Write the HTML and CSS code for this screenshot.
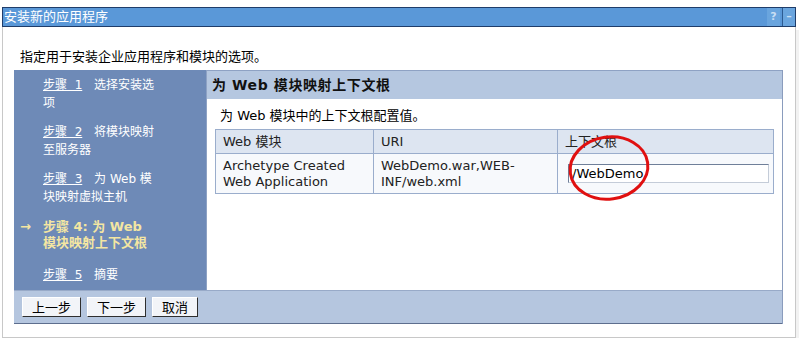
FILE: index.html
```html
<!DOCTYPE html>
<html lang="zh-CN">
<head>
    <meta charset="UTF-8">
    <title>安装新的应用程序</title>
    <link rel="stylesheet" href="styles.css">
</head>
<body>
<div class="window">
    <div class="titlebar">
        <span class="title">安装新的应用程序</span>
        <span class="tools">
            <span class="tool">?</span>
            <span class="tool">–</span>
        </span>
    </div>
    <div class="panel">
        <p class="intro">指定用于安装企业应用程序和模块的选项。</p>
        <div class="wizard">
            <div class="wizard-body">
                <ul class="steps">
                    <li><a href="#">步骤&nbsp;&nbsp;1</a> 选择安装选<br>项</li>
                    <li><a href="#">步骤&nbsp;&nbsp;2</a> 将模块映射<br>至服务器</li>
                    <li><a href="#">步骤&nbsp;&nbsp;3</a> 为 Web 模<br>块映射虚拟主机</li>
                    <li class="current"><span class="arrow">→</span>步骤 4: 为 Web<br>模块映射上下文根</li>
                    <li><a href="#">步骤&nbsp;&nbsp;5</a> 摘要</li>
                </ul>
                <div class="content">
                    <h2 class="content-title">为 Web 模块映射上下文根</h2>
                    <div class="content-inner">
                        <p class="hint">为 Web 模块中的上下文根配置值。</p>
                        <table class="grid">
                            <colgroup>
                                <col class="col-module">
                                <col class="col-uri">
                                <col class="col-root">
                            </colgroup>
                            <tr>
                                <th>Web 模块</th>
                                <th>URI</th>
                                <th>上下文根</th>
                            </tr>
                            <tr>
                                <td>Archetype Created Web Application</td>
                                <td>WebDemo.war,WEB-INF/web.xml</td>
                                <td class="root-cell">
                                    <input class="root-input" type="text" value="/WebDemo">
                                    <svg class="mark" width="88" height="70" viewBox="0 0 88 70">
                                        <ellipse cx="43" cy="35" rx="39" ry="31" fill="none" stroke="#e01010" stroke-width="3" transform="rotate(-8 43 35)"/>
                                    </svg>
                                </td>
                            </tr>
                        </table>
                    </div>
                </div>
            </div>
            <div class="buttons">
                <button class="btn">上一步</button>
                <button class="btn">下一步</button>
                <button class="btn btn-short">取消</button>
            </div>
        </div>
    </div>
</div>
</body>
</html>
```

FILE: styles.css
```css
* {
    box-sizing: border-box;
}

body {
    margin: 0;
    background: #fff;
    font-family: "DejaVu Sans", "Noto Sans CJK SC", sans-serif;
    font-size: 13px;
    color: #000;
}

.window {
    width: 794px;
    margin: 7px 0 0 2px;
}

.titlebar {
    height: 20px;
    display: flex;
    justify-content: space-between;
    align-items: stretch;
    background: #5a98d8;
    border: 1px solid #1f3d6a;
    color: #fff;
}

.title {
    padding-left: 1px;
    line-height: 18px;
    font-size: 13px;
}

.tools {
    display: flex;
}

.tool {
    width: 13px;
    text-align: center;
    font-size: 11px;
    font-weight: bold;
    line-height: 18px;
    color: #c9def3;
    background: #6aa5de;
    margin-left: 2px;
}

.tool + .tool {
    border-left: 1px solid #2c5b92;
    margin-left: 2px;
}

.panel {
    border: 1px solid #c8c8c8;
    border-top: none;
    padding: 0 11px 13px 11px;
    box-shadow: 3px 3px 0 #f2f2f2;
}

.intro {
    margin: 0;
    padding: 22px 0 5px 6px;
    line-height: 16px;
}

.wizard {
    width: 769px;
    border-right: 1px solid #8a9cbd;
}

.wizard-body {
    display: flex;
    height: 220px;
}

.steps {
    width: 192px;
    flex: none;
    margin: 0;
    padding: 6px 0 0 29px;
    list-style: none;
    background: #6e8ab7;
    color: #fff;
    font-size: 12px;
    line-height: 18px;
}

.steps li {
    margin-bottom: 11px;
}

.steps a {
    color: #fff;
    text-decoration: underline;
    margin-right: 8px;
}

.steps .current {
    position: relative;
    padding-top: 2px;
    color: #f4e6a2;
    font-weight: bold;
    font-size: 13px;
    line-height: 16px;
    margin-bottom: 15px;
}

.arrow {
    position: absolute;
    left: -23px;
    top: 2px;
}

.content {
    flex: 1;
    background: #fff;
    border-left: 1px solid #8ea2c4;
}

.content-title {
    margin: 0;
    height: 29px;
    padding-left: 5px;
    background: #b5c7e0;
    border-top: 1px solid #8ea2c4;
    font-size: 14px;
    letter-spacing: 0.6px;
    line-height: 28px;
    font-weight: bold;
    color: #111;
}

.content-inner {
    padding: 9px 8px 0 8px;
}

.hint {
    margin: 0 0 5px 5px;
    line-height: 16px;
}

.grid {
    width: 558px;
    table-layout: fixed;
    border-collapse: collapse;
    border: 1px solid #91a4c6;
}

.col-module {
    width: 158px;
}

.col-uri {
    width: 184px;
}

.col-root {
    width: 216px;
}

.grid th,
.grid td {
    border: 1px solid #9aadcc;
    text-align: left;
    font-weight: normal;
    padding: 0 7px;
    line-height: 16px;
    color: #222;
}

.grid th {
    height: 24px;
    background: #dde5f1;
}

.grid td {
    height: 40px;
    background: #f7f9fc;
    vertical-align: middle;
}

.root-cell {
    position: relative;
}

.root-input {
    display: block;
    width: 201px;
    height: 19px;
    margin-left: 3px;
    padding: 0 3px;
    border: 1px solid #c4ccd8;
    border-top-color: #6f7f99;
    border-left-color: #6f7f99;
    font-family: "DejaVu Sans", sans-serif;
    font-size: 13px;
    color: #000;
    background: #fff;
}

.mark {
    position: absolute;
    left: 8px;
    top: -21px;
}

.buttons {
    height: 34px;
    display: flex;
    align-items: center;
    gap: 6px;
    padding: 0 8px;
    background: #b5c6df;
    border-top: 1px solid #98aac8;
    border-bottom: 1px solid #5d6e8e;
}

.btn {
    width: 59px;
    height: 20px;
    padding: 0;
    background: #f2f4f8;
    border: 1px solid;
    border-color: #fff #2e2e2e #2e2e2e #fff;
    font-family: "Noto Sans CJK SC", sans-serif;
    font-size: 13px;
    line-height: 18px;
    color: #000;
}

.btn-short {
    width: 46px;
}
```
